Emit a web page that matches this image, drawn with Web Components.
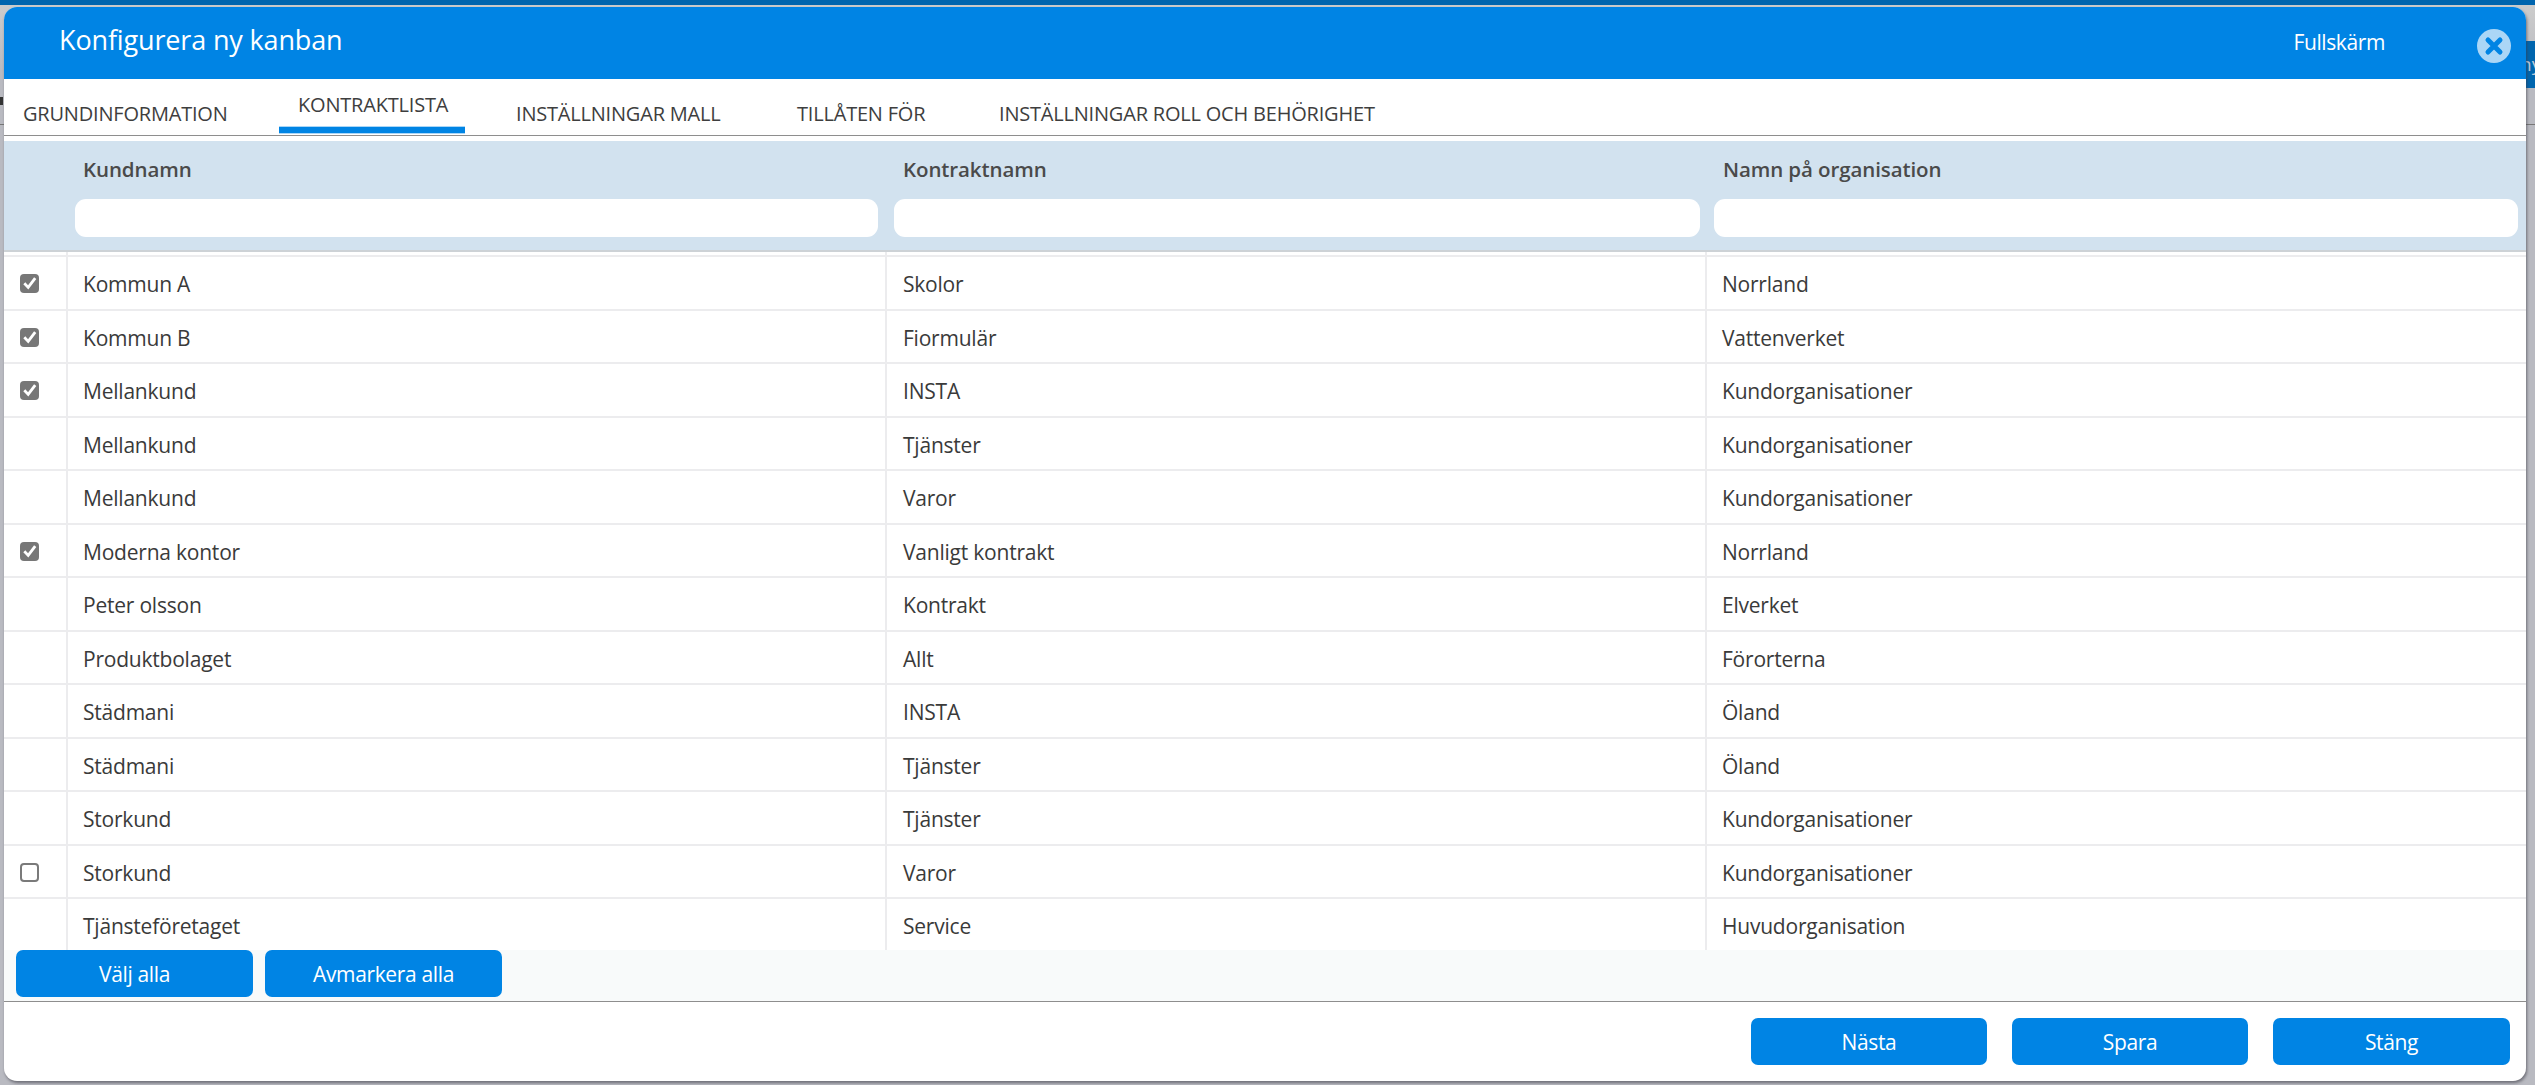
<!DOCTYPE html>
<html><head><meta charset="utf-8">
<style>
html,body{margin:0;height:100%;overflow:hidden}
body{background:#b9bac0;font-family:"Open Sans","Noto Sans",sans-serif}
</style></head><body>
<template id="t-backdrop"><style>
:host{display:block;position:relative;width:2535px;height:1085px;overflow:hidden;background:linear-gradient(#cbcbcb 0,#cbcbcb 10px,#b9bac1 70px)}
.top{position:absolute;left:0;top:0;right:0;height:5px;background:#0065ae}
.side{position:absolute;left:2526px;top:41px;right:0;height:47px;background:#0065ae;color:#b9c9dc;font-size:19px;overflow:hidden;white-space:nowrap;line-height:46px}
.side span{margin-left:-6px}
.line{position:absolute;left:2526px;top:124px;right:0;height:1px;background:#777}
.lline{position:absolute;left:0;top:124px;width:4px;height:1px;background:#777}
.mark{position:absolute;left:0;top:97px;width:3px;height:8px;background:#333}
::slotted(*){position:absolute;left:4px;top:7px}
</style><div class="top"></div><div class="side"><span>ny</span></div><div class="line"></div><div class="lline"></div><div class="mark"></div><slot></slot></template>

<template id="t-modal"><style>
:host{display:flex;flex-direction:column;width:2522px;height:1074px;background:#fff;border-radius:13px;overflow:hidden;box-shadow:1px 2px 3px rgba(60,60,70,.6)}
.head{flex:none;height:72px;background:#0084e4;color:#fff;display:flex;align-items:center;padding-left:55px;padding-right:15px}
.title{font-size:27px;flex:1;position:relative;top:-4px;letter-spacing:-.15px}
.fs{font-size:21px;position:relative;top:-1px;margin-right:92px;letter-spacing:-.4px}
svg{display:block;flex:none;margin-top:5px}
.foot{flex:none;height:80px;border-top:1px solid #8e8e8e;box-sizing:border-box;display:flex;justify-content:flex-end;align-items:flex-start;gap:25px;padding:16px 16px 0 0}
.main{flex:1;min-height:0;display:flex;flex-direction:column}
</style>
<div class="head"><div class="title">Konfigurera ny kanban</div><div class="fs">Fullskärm</div>
<svg width="34" height="34" viewBox="0 0 34 34"><circle cx="17" cy="17" r="17" fill="#abd6f6"/><path d="M11 11L23 23M23 11L11 23" stroke="#0084e4" stroke-width="5" stroke-linecap="round"/></svg></div>
<div class="main"><slot></slot></div>
<div class="foot"><slot name="foot"></slot></div></template>

<template id="t-tabs"><style>
:host{display:flex;flex:none;height:57px;box-sizing:border-box;border-bottom:1px solid #8e8e8e;align-items:flex-start}
</style><slot></slot></template>

<template id="t-tab"><style>
:host{display:block;box-sizing:border-box;font-size:20px;color:#3e3e3e;letter-spacing:-.2px;white-space:nowrap;padding-top:21px;height:56px}
:host([active]){padding-top:12px;height:54.5px;position:relative}
:host([active])::after{content:"";position:absolute;left:0;right:0;bottom:0;height:7.5px;background:#0084e4;border-top:1px solid #abd6f6;border-bottom:1px solid #abd6f6;box-sizing:border-box}
</style><slot></slot></template>

<template id="t-head"><style>
:host{display:grid;flex:none;grid-template-columns:62px 820px 819px 1fr;height:111px;margin-top:5px;background:#d2e2ef;box-sizing:border-box;border-bottom:2px solid #cdd2d6}
.c{font-size:20.5px;font-weight:600;color:#4a4a4a;letter-spacing:-.1px;min-width:0}
.c span{display:block;padding:15px 0 0 17px;line-height:26px;height:58px;box-sizing:border-box;white-space:nowrap}
.c i{display:block;height:38px;background:#fff;border-radius:11px}
</style>
<div></div>
<div class="c"><span>Kundnamn</span><i style="margin:0 8px 0 9px"></i></div>
<div class="c"><span>Kontraktnamn</span><i style="margin:0 5px 0 8px"></i></div>
<div class="c"><span style="padding-left:18px">Namn på organisation</span><i style="margin:0 8px 0 9px"></i></div>
</template>

<template id="t-body"><style>
:host{display:block;flex:1;min-height:0;overflow:hidden}
</style><slot></slot></template>

<template id="t-row"><style>
:host{display:grid;grid-template-columns:62px 819px 820px 1fr;height:53.5px;box-sizing:border-box;border-top:2px solid #ececee;font-size:21px;color:#3a3a3a;letter-spacing:-.22px}
.c{display:flex;align-items:center;padding:3px 0 0 16px;border-left:2px solid #ececee;white-space:nowrap;box-sizing:border-box}
.c.l{padding-left:15px}
.c.f{padding-left:16px;border-left:0;padding-top:2px}
.cb{width:19px;height:19px;box-sizing:border-box;border-radius:4px}
.cb.on{background:#777}
.cb.off{border:2px solid #7a7a7a;background:#fff}
svg{display:block}
</style><div class="c f" id="f"></div><div class="c l" id="a"></div><div class="c" id="b"></div><div class="c l" id="d"></div></template>

<template id="t-bar"><style>
:host{display:flex;flex:none;height:51px;gap:12px;background:#f8fafa;padding-left:12px;box-sizing:border-box}
</style><slot></slot></template>

<template id="t-btn"><style>
:host{display:flex;flex:none;align-items:center;justify-content:center;width:237px;height:47px;background:#0084e4;color:#fff;border-radius:7px;font-size:21px;letter-spacing:-.35px;box-sizing:border-box}
</style><slot></slot></template>

<k-backdrop>
<k-modal>
<k-tabs>
<k-tab style="padding-left:19px;width:275px">GRUNDINFORMATION</k-tab>
<k-tab active style="width:186px;padding-left:19px">KONTRAKTLISTA</k-tab>
<k-tab style="padding-left:51px;width:332px">INSTÄLLNINGAR MALL</k-tab>
<k-tab style="width:202px">TILLÅTEN FÖR</k-tab>
<k-tab>INSTÄLLNINGAR ROLL OCH BEHÖRIGHET</k-tab>
</k-tabs>
<k-head></k-head>
<k-body id="rows"></k-body>
<k-bar><k-btn>Välj alla</k-btn><k-btn>Avmarkera alla</k-btn></k-bar>
<k-btn slot="foot" style="width:236px">Nästa</k-btn>
<k-btn slot="foot" style="width:236px">Spara</k-btn>
<k-btn slot="foot">Stäng</k-btn>
</k-modal>
</k-backdrop>
<script>
function def(name,tid,init){customElements.define(name,class extends HTMLElement{constructor(){super();this.attachShadow({mode:'open'}).appendChild(document.getElementById(tid).content.cloneNode(true));}connectedCallback(){if(init)init(this)}})}
def('k-backdrop','t-backdrop');def('k-modal','t-modal');def('k-tabs','t-tabs');def('k-tab','t-tab');def('k-head','t-head');def('k-body','t-body');def('k-bar','t-bar');def('k-btn','t-btn');
def('k-row','t-row',el=>{const s=el.shadowRoot;s.getElementById('a').textContent=el.dataset.a||'';s.getElementById('b').textContent=el.dataset.b||'';s.getElementById('d').textContent=el.dataset.d||'';
 const c=el.dataset.c;if(c==='1')s.getElementById('f').innerHTML='<div class="cb on"><svg width="19" height="19" viewBox="0 0 19 19"><path d="M4.3 9.3L8.2 13.4L15.2 4.2" fill="none" stroke="#fff" stroke-width="2.8"/></svg></div>';
 if(c==='0')s.getElementById('f').innerHTML='<div class="cb off"></div>';});
const data=[['1','Kommun A','Skolor','Norrland'],['1','Kommun B','Fiormulär','Vattenverket'],['1','Mellankund','INSTA','Kundorganisationer'],['','Mellankund','Tjänster','Kundorganisationer'],['','Mellankund','Varor','Kundorganisationer'],['1','Moderna kontor','Vanligt kontrakt','Norrland'],['','Peter olsson','Kontrakt','Elverket'],['','Produktbolaget','Allt','Förorterna'],['','Städmani','INSTA','Öland'],['','Städmani','Tjänster','Öland'],['','Storkund','Tjänster','Kundorganisationer'],['0','Storkund','Varor','Kundorganisationer'],['','Tjänsteföretaget','Service','Huvudorganisation']];
const host=document.getElementById('rows');
const sp=document.createElement('k-row');sp.style.cssText='height:3px;border-top:0';host.appendChild(sp);
for(const d of data){const r=document.createElement('k-row');r.dataset.c=d[0];r.dataset.a=d[1];r.dataset.b=d[2];r.dataset.d=d[3];host.appendChild(r);}
</script>
</body></html>
